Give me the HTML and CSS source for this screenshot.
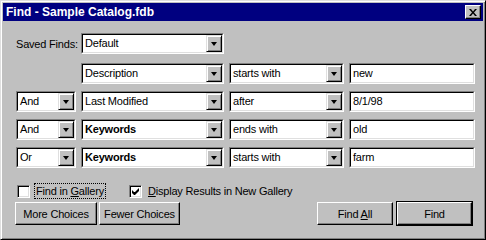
FILE: index.html
```html
<!DOCTYPE html>
<html lang="en">
<head>
  <meta charset="UTF-8">
  <title>Find - Sample Catalog.fdb</title>
  <link rel="stylesheet" href="styles.css">
</head>
<body>
  <div class="window">
    <div class="titlebar">
      <span class="title">Find - Sample Catalog.fdb</span>
      <button class="close">
        <svg width="8" height="7" viewBox="0 0 8 7"><path d="M0 0h2l2 2.5 2-2.5h2l-3 3.5 3 3.5h-2l-2-2.5-2 2.5h-2l3-3.5z" fill="#000"/></svg>
      </button>
    </div>

    <div class="content">
      <div class="saved">
        <span class="label">Saved Finds:</span>
        <div class="combo w-field"><div class="inner"><span class="val">Default</span><span class="drop"></span></div></div>
      </div>

      <div class="criteria">
        <div></div>
        <div class="combo"><div class="inner"><span class="val">Description</span><span class="drop"></span></div></div>
        <div class="combo"><div class="inner"><span class="val">starts with</span><span class="drop"></span></div></div>
        <div class="field"><div class="inner"><span class="val">new</span></div></div>

        <div class="combo"><div class="inner"><span class="val">And</span><span class="drop"></span></div></div>
        <div class="combo"><div class="inner"><span class="val">Last Modified</span><span class="drop"></span></div></div>
        <div class="combo"><div class="inner"><span class="val">after</span><span class="drop"></span></div></div>
        <div class="field"><div class="inner"><span class="val">8/1/98</span></div></div>

        <div class="combo"><div class="inner"><span class="val">And</span><span class="drop"></span></div></div>
        <div class="combo"><div class="inner"><span class="val bold">Keywords</span><span class="drop"></span></div></div>
        <div class="combo"><div class="inner"><span class="val">ends with</span><span class="drop"></span></div></div>
        <div class="field"><div class="inner"><span class="val">old</span></div></div>

        <div class="combo"><div class="inner"><span class="val">Or</span><span class="drop"></span></div></div>
        <div class="combo"><div class="inner"><span class="val bold">Keywords</span><span class="drop"></span></div></div>
        <div class="combo"><div class="inner"><span class="val">starts with</span><span class="drop"></span></div></div>
        <div class="field"><div class="inner"><span class="val">farm</span></div></div>
      </div>

      <div class="checks">
        <label class="check first"><span class="box"></span><span class="text focus">Find in <u>G</u>allery</span></label>
        <label class="check second"><span class="box"><svg width="7" height="7" viewBox="0 0 7 7"><path d="M0 2v3l2 2h1l4-4v-3l-4 4h-1z" fill="#000"/></svg></span><span class="text"><u>D</u>isplay Results in New Gallery</span></label>
      </div>

      <div class="actions">
        <button class="btn more">More Choices</button>
        <button class="btn fewer">Fewer Choices</button>
        <span class="spacer"></span>
        <button class="btn findall">Find <u>A</u>ll</button>
        <button class="btn find default">Find</button>
      </div>
    </div>
  </div>
</body>
</html>
```

FILE: styles.css
```css
body {
  margin: 0;
  font-family: 'Liberation Sans', Arial, sans-serif;
  font-size: 11px;
  letter-spacing: -0.2px;
  color: #000;
  background: #c0c0c0;
}

.window {
  width: 486px;
  height: 240px;
  box-sizing: border-box;
  background: #c0c0c0;
  border: 1px solid;
  border-color: #dfdfdf #000 #000 #dfdfdf;
  box-shadow: inset 1px 1px #fff, inset -1px -1px #808080;
  padding: 2px;
}

.titlebar {
  height: 18px;
  background: #000080;
  color: #fff;
  display: flex;
  align-items: center;
  padding: 0 2px 0 3px;
}

.title {
  flex: 1;
  font-weight: bold;
  font-size: 12px;
  letter-spacing: 0;
}

.close {
  width: 16px;
  height: 14px;
  padding: 0;
  margin: 0;
  background: #c0c0c0;
  border: 1px solid;
  border-color: #fff #000 #000 #fff;
  box-shadow: inset -1px -1px #808080;
  display: flex;
  align-items: center;
  justify-content: center;
}

.content {
  padding: 12px 11px 0 12px;
}

.saved {
  display: flex;
  align-items: center;
  height: 21px;
}

.saved .label {
  width: 65px;
  padding-left: 1px;
}

.w-field {
  width: 143px;
}

.combo,
.field {
  height: 21px;
  box-sizing: border-box;
  border: 1px solid;
  border-color: #808080 #fff #fff #808080;
  background: #fff;
}

.inner {
  height: 100%;
  box-sizing: border-box;
  border: 1px solid;
  border-color: #000 #dfdfdf #dfdfdf #000;
  display: flex;
  align-items: stretch;
}

.val {
  flex: 1;
  padding-left: 2px;
  line-height: 17px;
  white-space: nowrap;
  overflow: hidden;
}

.bold {
  font-weight: bold;
}

.drop {
  width: 16px;
  box-sizing: border-box;
  background: #c0c0c0;
  border: 1px solid;
  border-color: #dfdfdf #000 #000 #dfdfdf;
  box-shadow: inset 1px 1px #fff, inset -1px -1px #808080;
  display: flex;
  align-items: center;
  justify-content: center;
}

.drop::after {
  content: "";
  width: 0;
  height: 0;
  border-left: 3.5px solid transparent;
  border-right: 3.5px solid transparent;
  border-top: 4px solid #000;
  margin-top: 1px;
}

.criteria {
  margin-top: 9px;
  margin-left: 1px;
  display: grid;
  grid-template-columns: 60px 143px 115px 126px;
  grid-auto-rows: 21px;
  column-gap: 5px;
  row-gap: 7px;
}

.checks {
  margin-top: 15px;
  height: 16px;
  display: flex;
  align-items: center;
}

.check {
  display: flex;
  align-items: center;
}

.check.first {
  margin-left: 2px;
  width: 112px;
}

.box {
  width: 13px;
  height: 13px;
  box-sizing: border-box;
  background: #fff;
  border: 1px solid;
  border-color: #808080 #fff #fff #808080;
  box-shadow: inset 1px 1px #000, inset -1px -1px #dfdfdf;
  display: flex;
  align-items: center;
  justify-content: center;
}

.text {
  margin-left: 4px;
  padding: 1px 1px;
  border: 1px solid transparent;
}

.text.focus {
  border: 1px dotted #000;
  margin-left: 4px;
}

.actions {
  margin-top: 3px;
  display: flex;
  gap: 2px;
}

.spacer {
  flex: 1;
}

.btn {
  height: 23px;
  padding: 0;
  margin: 0;
  font-family: inherit;
  font-size: 11px;
  letter-spacing: -0.2px;
  color: #000;
  background: #c0c0c0;
  border: 1px solid;
  border-color: #fff #000 #000 #fff;
  box-shadow: inset -1px -1px #808080;
}

.more {
  width: 82px;
}

.fewer {
  width: 81px;
}

.findall {
  width: 76px;
  margin-right: 2px;
}

.find {
  width: 75px;
}

.find.default {
  outline: 1px solid #000;
  outline-offset: 0;
}
```
